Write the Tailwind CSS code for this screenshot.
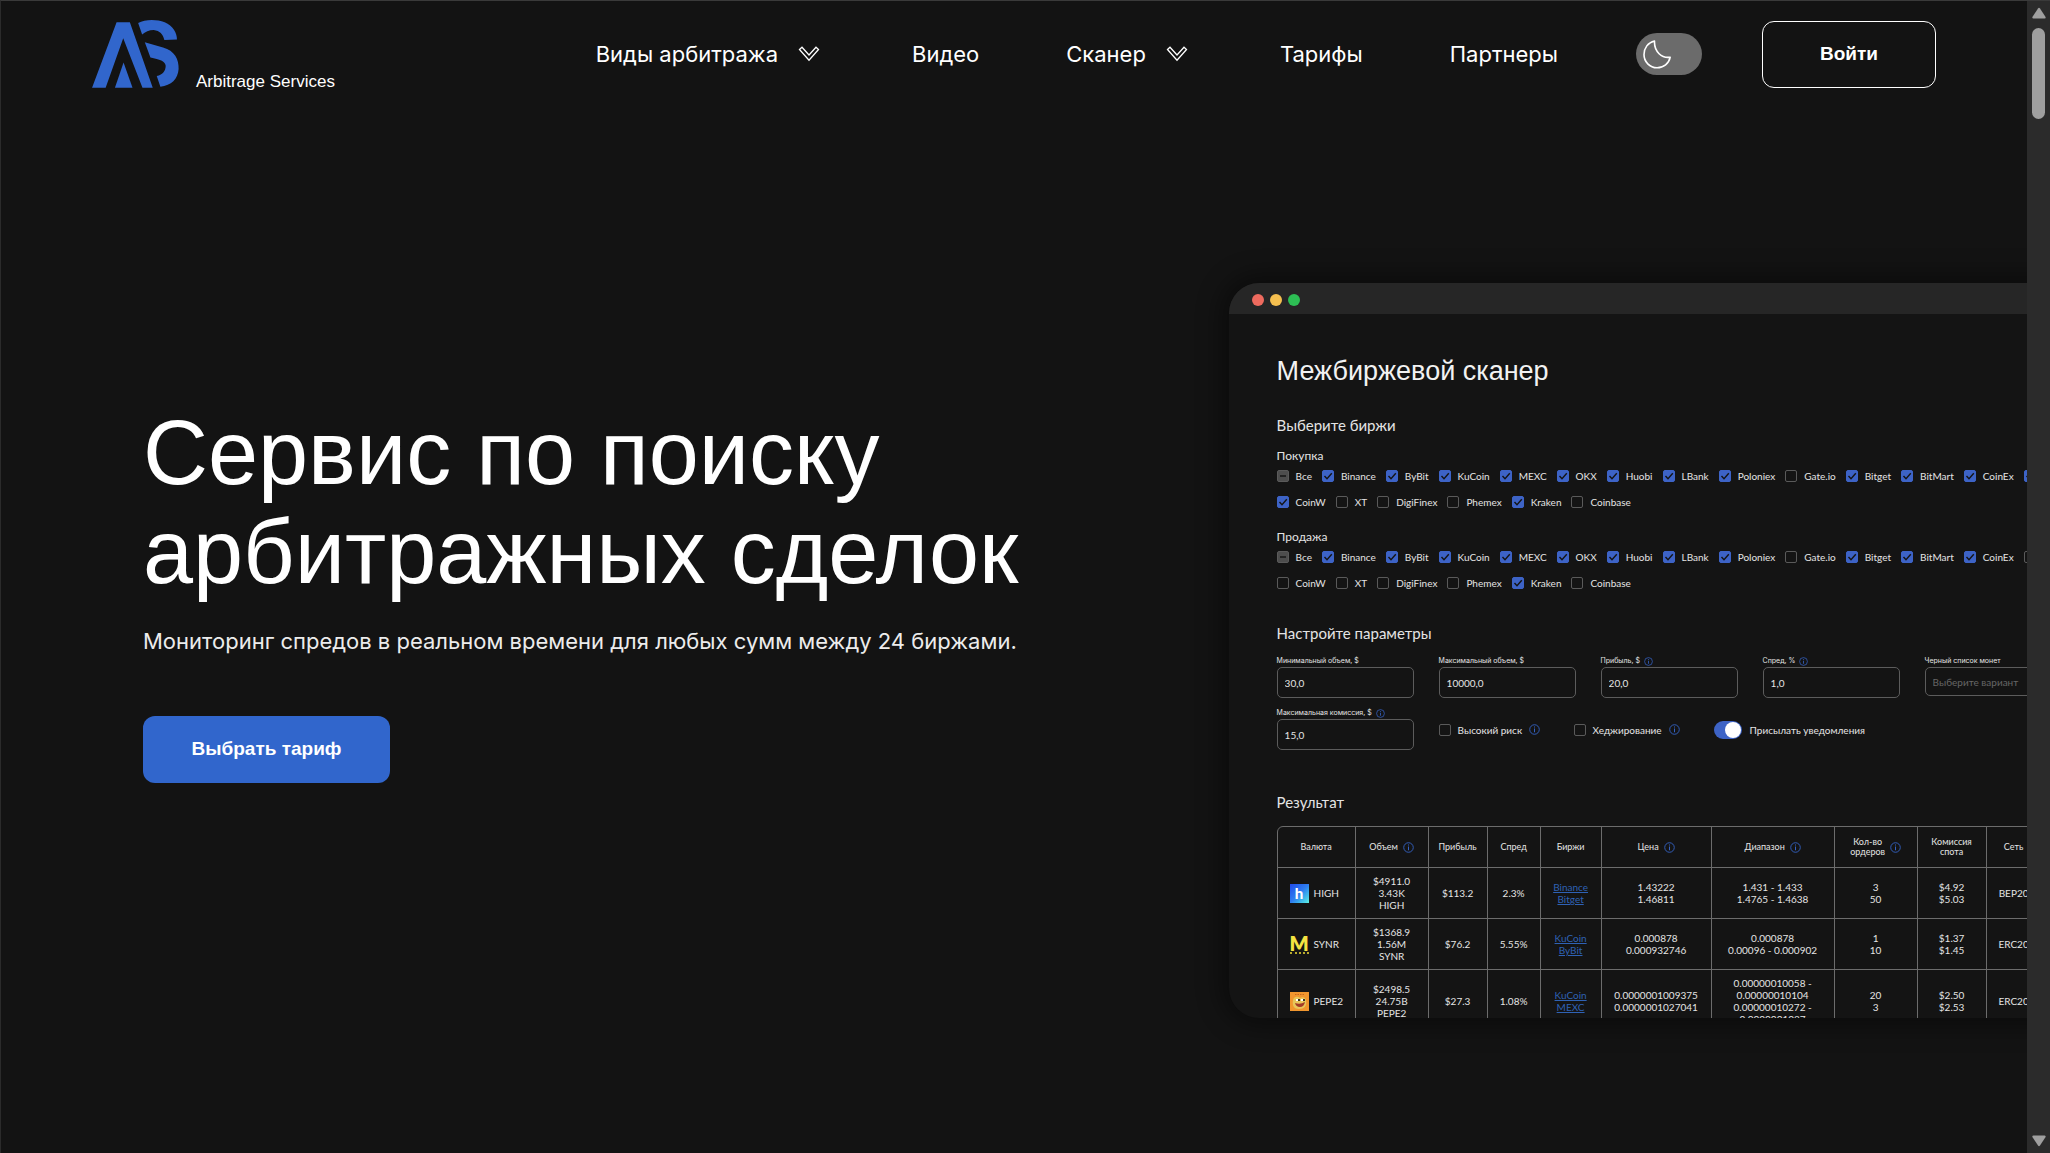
<!DOCTYPE html>
<html lang="ru">
<head>
    <meta charset="UTF-8">
    <meta name="viewport" content="width=device-width, initial-scale=1.0">
    <title>Arbitrage Services</title>
    <script src="https://cdn.jsdelivr.net/npm/@tailwindcss/browser@4"></script>
</head>
<body class="h-screen flex overflow-hidden bg-[#131313] text-white font-['Inter',sans-serif]">

<!-- Icons -->
<svg class="hidden">
    <symbol id="chevron" viewBox="0 0 22 16">
        <path d="M1.5 3.5 4 1.2l7 7.8 7-7.8 2.5 2.3L11 14.2z" fill="none" stroke="currentColor" stroke-width="1.3"/>
    </symbol>
    <symbol id="info" viewBox="0 0 12 12">
        <circle cx="6" cy="6" r="5.2" fill="none" stroke="currentColor" stroke-width="1"/>
        <path d="M6 5v4M6 2.8v1.1" fill="none" stroke="currentColor" stroke-width="1.1"/>
    </symbol>
</svg>

<div class="flex-1 min-w-0 overflow-hidden border-t border-l border-t-[#3a3a3a] border-l-[#2b2b2b]">

    <!-- Header -->
    <header class="flex items-center pt-[19px] pl-[91px] pr-[91px]">
        <a href="#" class="flex items-end gap-[17px]">
            <svg class="w-[87px] h-[68px]" viewBox="96 57 262 205" fill="#3166cc">
                <path d="M96 261 170 64h40l69 197h-31L190 112 137 261z"/>
                <path d="M191 185 165 261h53z"/>
                <path d="M235 66C255 55 290 54 315 64 340 75 352 95 352 116L314 117C310 100 300 89 282 87 268 87 256 93 247 101z"/>
                <path d="M255 124 310 140C345 150 358 175 357 205 355 235 335 255 302 258L291 226C310 222 318 210 318 195 316 180 300 176 272 170z"/>
            </svg>
            <span class="font-['Liberation_Sans',sans-serif] text-[17px] leading-3 whitespace-nowrap">Arbitrage Services</span>
        </a>

        <nav class="ml-auto flex items-center text-[22px] leading-8 whitespace-nowrap">
            <button type="button" class="flex items-center gap-5 mr-[92px]">
                Виды арбитража
                <svg class="w-[22px] h-4"><use href="#chevron"/></svg>
            </button>
            <a href="#" class="mr-[87px]">Видео</a>
            <button type="button" class="flex items-center gap-5 mr-[92px]">
                Сканер
                <svg class="w-[22px] h-4"><use href="#chevron"/></svg>
            </button>
            <a href="#" class="mr-[87px]">Тарифы</a>
            <a href="#">Партнеры</a>
        </nav>

        <button type="button" aria-label="Тёмная тема" class="ml-[78px] w-[66px] h-[42px] rounded-full bg-[#6b6b6b] flex items-center pl-[7px]">
            <svg class="w-[28px] h-[29px]" viewBox="0 0 28 29" fill="none" stroke="#fff" stroke-width="1.6" stroke-linejoin="round">
                <path d="M11.5 1C5 2.500 1 8 1 14.500A13.200 13.200 0 0 0 14 27.800C20.500 27.800 26 23.500 27.200 17.200 19 18.500 11 12 11.500 1z"/>
            </svg>
        </button>
        <button type="button" class="ml-[60px] w-[174px] h-[67px] rounded-xl border border-white font-['Liberation_Sans',sans-serif] font-bold text-[19px]">Войти</button>
    </header>

    <!-- Hero -->
    <main class="flex items-start gap-3 mt-[195px]">
        <section class="w-3/5 shrink-0 pl-[142px] pt-[121px]">
            <h1 class="font-['Liberation_Sans',sans-serif] text-[90px] leading-[99px]">Сервис по поиску<br>арбитражных сделок</h1>
            <p class="mt-[23px] text-[22px] leading-8 text-[#ececec]">Мониторинг спредов в реальном времени для любых сумм между 24 биржами.</p>
            <button type="button" class="mt-[59px] w-[247px] h-[67px] rounded-xl bg-[#3166cc] font-['Liberation_Sans',sans-serif] font-bold text-[19px]">Выбрать тариф</button>
        </section>

        <!-- Scanner preview window -->
        <section class="w-[1100px] h-[735px] shrink-0 overflow-hidden rounded-[30px] bg-[#141414] shadow-[0_0_24px_8px] shadow-black/40 font-['Lato',sans-serif] text-[10px] leading-3 text-[#e4e4e4] whitespace-nowrap">
            <div class="h-[31px] bg-[#262626] flex items-center gap-[6px] pl-[23px] pt-[3px]">
                <span class="size-3 rounded-full bg-[#ed6a5e]"></span>
                <span class="size-3 rounded-full bg-[#f5bf4f]"></span>
                <span class="size-3 rounded-full bg-[#2dbe54]"></span>
            </div>
            <div class="px-12 pt-[41px]">
                <h2 class="font-['Liberation_Sans',sans-serif] text-[27px] leading-8 text-[#f2f2f2]">Межбиржевой сканер</h2>

                <h3 class="mt-7 text-[15px] leading-5">Выберите биржи</h3>
                <h4 class="mt-[13px] text-[12px] leading-4">Покупка</h4>
                <div id="buy" class="mt-[6px] space-y-[14px]"></div>
                <h4 class="mt-[21px] text-[12px] leading-4">Продажа</h4>
                <div id="sell" class="mt-[6px] space-y-[14px]"></div>

                <h3 class="mt-[34px] text-[15px] leading-5">Настройте параметры</h3>
                <div class="mt-[14px] grid grid-cols-[repeat(6,137px)] gap-x-[25px] gap-y-[11px]">
                    <label class="flex flex-col gap-[2px] font-['Inter',sans-serif] text-[7px] leading-2">
                        <span>Минимальный объем, $</span>
                        <input type="text" value="30,0" class="w-full h-[31px] rounded-[5px] border border-[#5c5c5c] px-[7px] font-['Lato',sans-serif] text-[10px]">
                    </label>
                    <label class="flex flex-col gap-[2px] font-['Inter',sans-serif] text-[7px] leading-2">
                        <span>Максимальный объем, $</span>
                        <input type="text" value="10000,0" class="w-full h-[31px] rounded-[5px] border border-[#5c5c5c] px-[7px] font-['Lato',sans-serif] text-[10px]">
                    </label>
                    <label class="flex flex-col gap-[2px] font-['Inter',sans-serif] text-[7px] leading-2">
                        <span class="flex items-center h-2 gap-1">Прибыль, $ <svg class="size-[9px] text-[#3562c4]"><use href="#info"/></svg></span>
                        <input type="text" value="20,0" class="w-full h-[31px] rounded-[5px] border border-[#5c5c5c] px-[7px] font-['Lato',sans-serif] text-[10px]">
                    </label>
                    <label class="flex flex-col gap-[2px] font-['Inter',sans-serif] text-[7px] leading-2">
                        <span class="flex items-center h-2 gap-1">Спред, % <svg class="size-[9px] text-[#3562c4]"><use href="#info"/></svg></span>
                        <input type="text" value="1,0" class="w-full h-[31px] rounded-[5px] border border-[#5c5c5c] px-[7px] font-['Lato',sans-serif] text-[10px]">
                    </label>
                    <label class="flex flex-col gap-[2px] font-['Inter',sans-serif] text-[7px] leading-2">
                        <span>Черный список монет</span>
                        <input type="text" placeholder="Выберите вариант" class="w-full h-[29px] rounded-[5px] border border-[#5c5c5c] px-[7px] font-['Lato',sans-serif] text-[10px] placeholder:text-[#666]">
                    </label>
                    <label class="col-start-1 flex flex-col gap-[2px] font-['Inter',sans-serif] text-[7px] leading-2">
                        <span class="flex items-center h-2 gap-1">Максимальная комиссия, $ <svg class="size-[9px] text-[#3562c4]"><use href="#info"/></svg></span>
                        <input type="text" value="15,0" class="w-full h-[31px] rounded-[5px] border border-[#5c5c5c] px-[7px] font-['Lato',sans-serif] text-[10px]">
                    </label>
                    <div class="col-span-4 flex items-center">
                        <label class="w-[135px] flex items-center gap-[7px]">
                            <input type="checkbox" class="appearance-none size-3 rounded-[2px] border border-[#5a5a5a] checked:bg-[#3d63c6]">
                            Высокий риск
                            <svg class="size-[11px] text-[#3562c4]"><use href="#info"/></svg>
                        </label>
                        <label class="w-[140px] flex items-center gap-[7px]">
                            <input type="checkbox" class="appearance-none size-3 rounded-[2px] border border-[#5a5a5a] checked:bg-[#3d63c6]">
                            Хеджирование
                            <svg class="size-[11px] text-[#3562c4]"><use href="#info"/></svg>
                        </label>
                        <label class="flex items-center gap-2">
                            <input type="checkbox" role="switch" checked class="appearance-none w-7 h-[18px] rounded-full bg-[#555] checked:bg-[#3d63c6] flex items-center checked:justify-end px-px before:size-4 before:rounded-full before:bg-white">
                            Присылать уведомления
                        </label>
                    </div>
                </div>

                <h3 class="mt-[42px] text-[15px] leading-5">Результат</h3>
                <div class="mt-[14px] w-[1000px] rounded-t-[6px] border border-[#6c6c6c] overflow-hidden">
                    <table class="w-full table-fixed border-separate border-spacing-0 text-center">
                        <colgroup>
                            <col class="w-[78px]"><col class="w-[73px]"><col class="w-[59px]"><col class="w-[53px]"><col class="w-[61px]"><col class="w-[110px]"><col class="w-[123px]"><col class="w-[83px]"><col class="w-[69px]"><col class="w-[55px]"><col>
                        </colgroup>
                        <thead id="head" class="text-[9px] leading-[10px]"></thead>
                        <tbody id="rows"></tbody>
                    </table>
                </div>
            </div>
        </section>
    </main>
</div>

<!-- Page scrollbar -->
<aside class="w-[23px] shrink-0 bg-[#2b2b2b] border-t border-[#3a3a3a] flex flex-col items-center justify-between py-[6px]">
    <div class="flex flex-col items-center gap-[9px]">
        <svg class="w-[14px] h-3" viewBox="0 0 14 12" fill="#9f9f9f"><path d="M6 1.500q1-1.500 2 0L13.600 10q.4 1.500-1 1.500H1.400Q0 11.500.4 10z"/></svg>
        <span class="w-[13px] h-[91px] rounded-full bg-[#9f9f9f]"></span>
    </div>
    <svg class="w-[14px] h-3 rotate-180" viewBox="0 0 14 12" fill="#9f9f9f"><path d="M6 1.500q1-1.500 2 0L13.600 10q.4 1.500-1 1.500H1.400Q0 11.500.4 10z"/></svg>
</aside>

<script>
    const exchanges = [
        ['Все', 'Binance', 'ByBit', 'KuCoin', 'MEXC', 'OKX', 'Huobi', 'LBank', 'Poloniex', 'Gate.io', 'Bitget', 'BitMart', 'CoinEx', 'BingX'],
        ['CoinW', 'XT', 'DigiFinex', 'Phemex', 'Kraken', 'Coinbase']
    ];
    const off = {
        buy: ['Gate.io', 'XT', 'DigiFinex', 'Phemex', 'Coinbase'],
        sell: ['Gate.io', 'BingX', 'CoinW', 'XT', 'DigiFinex', 'Phemex', 'Coinbase']
    };

    function checkbox(name, side) {
        const all = name === 'Все';
        const checked = !all && !off[side].includes(name);
        const mark = all ? 'M3 6h6' : 'M2.500 6l2.500 2.700L9.800 3.300';
        return `<label class="flex items-center gap-[7px]">
            <span class="relative size-3">
                <input type="checkbox" ${checked ? 'checked' : ''} class="block appearance-none size-3 rounded-[2px] border border-[#5a5a5a] checked:border-[#3d63c6] checked:bg-[#3d63c6] ${all ? 'bg-[#4d4d4d]' : ''}">
                ${checked || all ? `<svg class="absolute inset-0 size-3 pointer-events-none" viewBox="0 0 12 12" fill="none" stroke="#141414" stroke-width="1.400"><path d="${mark}"/></svg>` : ''}
            </span>
            ${name}
        </label>`;
    }

    for (const side of ['buy', 'sell']) {
        document.getElementById(side).innerHTML = exchanges.map(row =>
            `<div class="flex gap-[10px]">${row.map(name => checkbox(name, side)).join('')}</div>`
        ).join('');
    }

    const columns = [
        ['Валюта'], ['Объем', true], ['Прибыль'], ['Спред'], ['Биржи'], ['Цена', true],
        ['Диапазон', true], ['Кол-во<br>ордеров', true], ['Комиссия<br>спота'], ['Сеть'], ['Вывод']
    ];
    document.getElementById('head').innerHTML = '<tr>' + columns.map(([title, info]) =>
        `<th class="h-[41px] border-r border-b border-[#6c6c6c] font-normal"><span class="flex items-center justify-center gap-[5px]"><span>${title}</span>${info ? '<svg class="size-[11px] text-[#3562c4]"><use href="#info"/></svg>' : ''}</span></th>`
    ).join('') + '</tr>';

    const icons = {
        HIGH: '<span class="size-[19px] bg-linear-to-br from-[#2347e8] via-[#2f7df0] to-[#5ff0e0] text-white font-black text-[15px] leading-[19px]">h</span>',
        SYNR: '<span class="size-[19px] flex justify-center border-b-2 border-dotted border-[#b8a92c] text-[#f5e342] font-[\'Open_Sans\',sans-serif] font-extrabold text-[20px] leading-[17px]">M</span>',
        PEPE2: `<svg class="size-[19px]" viewBox="0 0 19 19"><path fill="#f0962e" d="M0 0h19v19H0z"/><path fill="#e8c65a" d="M3 8c1-4 5-4 7-2 3-2 6 0 6 3 1 5-2 8-7 8S2 14 3 8z"/><path fill="#fff" d="M6 7h4v2H6zM11 7h4v2h-4z"/><path fill="#3b3320" d="M8 7h2v2H8zM13 7h2v2h-2z"/><path fill="#a33a28" d="M5 11q5 2 10-1-1 5-5 5t-5-4z"/><path stroke="#c7661c" stroke-dasharray="1.500 1" d="M5 2.500h9"/></svg>`
    };
    const rows = [
        ['HIGH', ['$4911.0', '3.43K', 'HIGH'], '$113.2', '2.3%', ['Binance', 'Bitget'], ['1.43222', '1.46811'], ['1.431 - 1.433', '1.4765 - 1.4638'], ['3', '50'], ['$4.92', '$5.03'], 'BEP20', '$0.5'],
        ['SYNR', ['$1368.9', '1.56M', 'SYNR'], '$76.2', '5.55%', ['KuCoin', 'ByBit'], ['0.000878', '0.000932746'], ['0.000878', '0.00096 - 0.000902'], ['1', '10'], ['$1.37', '$1.45'], 'ERC20', '$4.1'],
        ['PEPE2', ['$2498.5', '24.75B', 'PEPE2'], '$27.3', '1.08%', ['KuCoin', 'MEXC'], ['0.0000001009375', '0.0000001027041'], ['0.00000010058 -', '0.00000010104', '0.00000010272 -', '0.0000001027'], ['20', '3'], ['$2.50', '$2.53'], 'ERC20', '$3.8']
    ];
    document.getElementById('rows').innerHTML = rows.map(row => '<tr>' + row.map((cell, i) => {
        let html = Array.isArray(cell) ? cell.join('<br>') : cell;
        if (i === 0) html = `<span class="flex items-center gap-[5px] pl-3">${icons[cell]}${cell}</span>`;
        if (i === 4) html = cell.map(name => `<a href="#" class="underline text-[#2f62b5]">${name}</a>`).join('<br>');
        return `<td class="h-[51px] py-[7px] border-r border-b border-[#6c6c6c]">${html}</td>`;
    }).join('') + '</tr>').join('');
</script>
</body>
</html>
